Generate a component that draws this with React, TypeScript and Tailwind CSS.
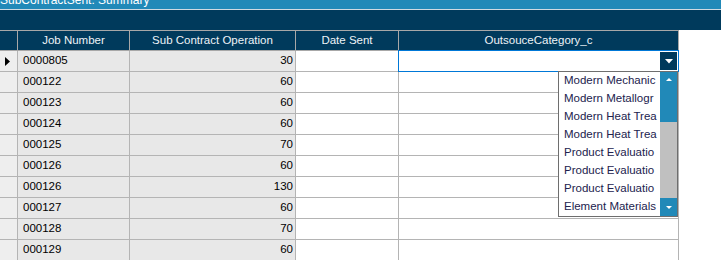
import React from "react";

const rows: [string, string][] = [
  ["0000805", "30"],
  ["000122", "60"],
  ["000123", "60"],
  ["000124", "60"],
  ["000125", "70"],
  ["000126", "60"],
  ["000126", "130"],
  ["000127", "60"],
  ["000128", "70"],
  ["000129", "60"],
];

const items = [
  "Modern Mechanic",
  "Modern Metallogr",
  "Modern Heat Trea",
  "Modern Heat Trea",
  "Product Evaluatio",
  "Product Evaluatio",
  "Product Evaluatio",
  "Element Materials",
];

export default function App() {
  return (
    <div
      className="w-[721px] h-[260px] overflow-hidden bg-white flex flex-col text-[11.5px] text-black"
      style={{ fontFamily: '"Liberation Sans", Arial, sans-serif' }}
    >
      <div className="h-[9px] bg-[#2189b8] overflow-hidden shrink-0">
        <div className="text-white text-[12px] leading-[12px] mt-[-6px] pl-[0px]">
          SubContractSent: Summary
        </div>
      </div>
      <div className="h-px bg-[#d0dae2] shrink-0" />
      <div className="h-[20px] bg-[#003a5c] shrink-0" />
      {/* header */}
      <div className="flex shrink-0">
        <div className="flex bg-[#003a5c] text-[#eef3f7] border-t border-b border-[#a8a8a8] h-[21px]">
          <div className="w-[18px] border-r border-[#a8a8a8]" />
          <div className="w-[112px] border-r border-[#a8a8a8] flex items-center justify-center">Job Number</div>
          <div className="w-[166px] border-r border-[#a8a8a8] flex items-center justify-center">Sub Contract Operation</div>
          <div className="w-[103px] border-r border-[#a8a8a8] flex items-center justify-center">Date Sent</div>
          <div className="w-[280px] border-r border-[#a8a8a8] flex items-center justify-center">OutsouceCategory_c</div>
        </div>
      </div>
      {/* rows */}
      {rows.map(([job, op], i) => (
        <div key={i} className="flex shrink-0 h-[21px]">
          <div className="w-[18px] bg-[#eeeeee] border-r border-b border-[#b4b4b4] flex items-center pl-[5px]">
            {i === 0 && (
              <svg width="5" height="9" viewBox="0 0 5 9">
                <path d="M0 0 L5 4.5 L0 9 Z" fill="#000" />
              </svg>
            )}
          </div>
          <div className="w-[112px] bg-[#e8e8e8] border-r border-b border-[#b4b4b4] flex items-center pl-[5px]">
            {job}
          </div>
          <div className="w-[166px] bg-[#e8e8e8] border-r border-b border-[#b4b4b4] flex items-center justify-end pr-[2px]">
            {op}
          </div>
          <div className="w-[103px] bg-white border-r border-b border-[#b4b4b4]" />
          <div className="w-[280px] bg-white border-r border-b border-[#b4b4b4] relative">
            {i === 0 && (
              <>
                <div className="absolute top-[-1px] left-[-1px] w-[281px] h-[22px] border border-[#0078d7] z-10">
                  <div className="absolute right-[1px] top-[1px] w-[17px] h-[18px] bg-[#003a5c] flex items-center justify-center">
                    <svg width="8" height="5" viewBox="0 0 8 5">
                      <path d="M0 0 L8 0 L4 4.5 Z" fill="#fff" />
                    </svg>
                  </div>
                </div>
                <div className="absolute left-[159px] top-[20px] w-[120px] h-[146px] border border-[#6e6e6e] bg-white z-20 flex">
                  <div className="flex-1 flex flex-col overflow-hidden">
                    {items.map((t, k) => (
                      <div
                        key={k}
                        className="h-[18px] flex items-center pl-[5px] whitespace-nowrap overflow-hidden text-[#22224e] text-[11.5px]"
                      >
                        {t}
                      </div>
                    ))}
                  </div>
                  <div className="w-[17px] flex flex-col bg-[#c0c0c0]">
                    <div className="h-[50px] bg-[#2189b8] flex justify-center pt-[6px]">
                      <svg width="6" height="3" viewBox="0 0 6 3">
                        <path d="M0 3 L6 3 L3 0 Z" fill="#fff" />
                      </svg>
                    </div>
                    <div className="flex-1" />
                    <div className="h-[18px] bg-[#2189b8] flex items-center justify-center">
                      <svg width="6" height="3" viewBox="0 0 6 3">
                        <path d="M0 0 L6 0 L3 3 Z" fill="#fff" />
                      </svg>
                    </div>
                  </div>
                </div>
              </>
            )}
          </div>
        </div>
      ))}
    </div>
  );
}
